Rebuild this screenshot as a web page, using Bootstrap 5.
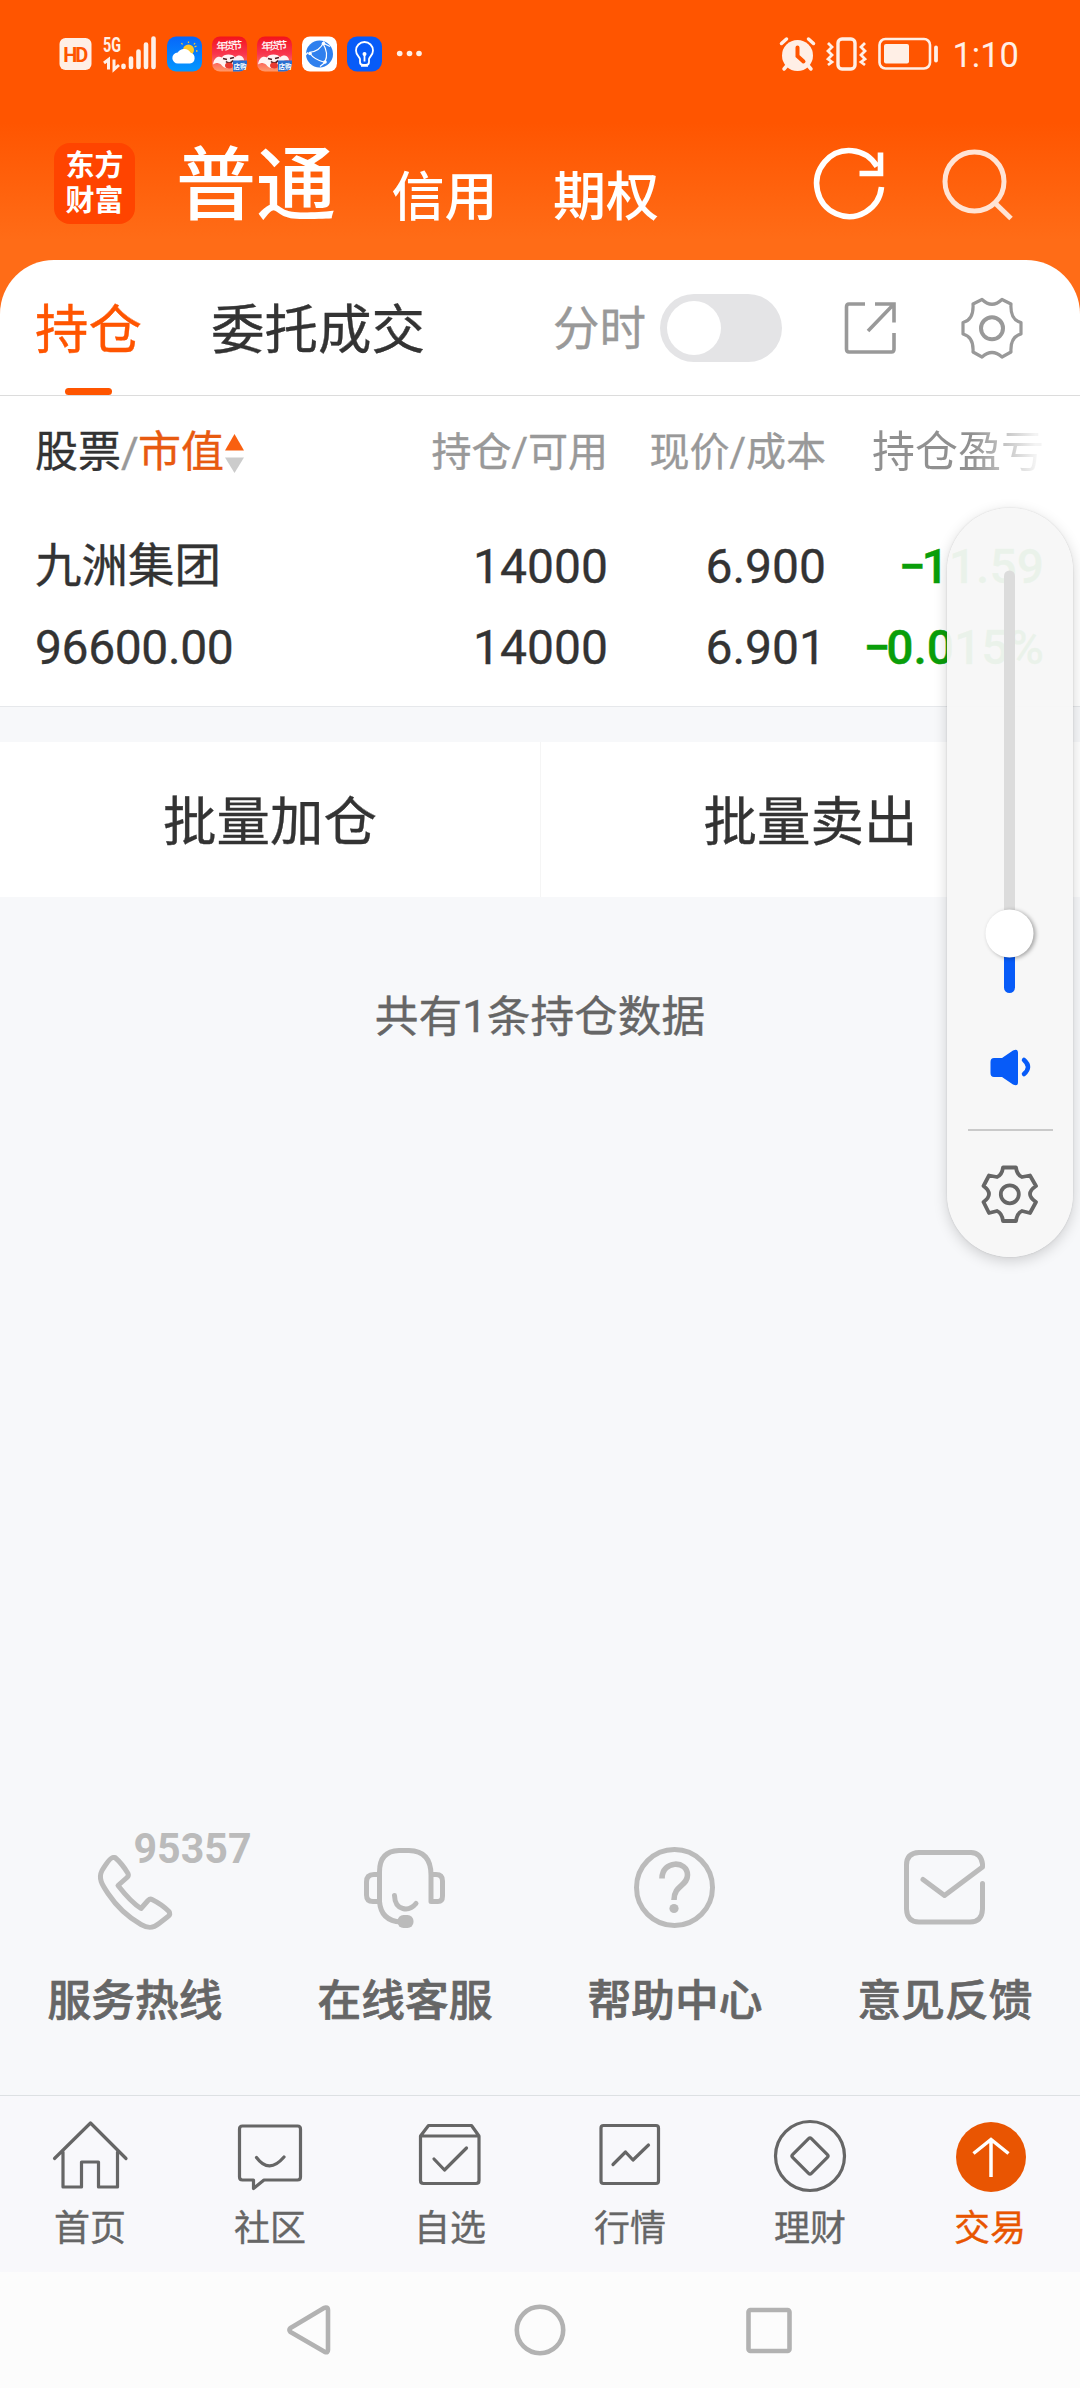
<!DOCTYPE html>
<html lang="zh-CN">
<head>
<meta charset="utf-8">
<meta name="viewport" content="width=device-width, initial-scale=1">
<title>交易</title>
<link rel="stylesheet" href="https://cdn.jsdelivr.net/npm/bootstrap@5.3.0/dist/css/bootstrap.min.css">
<style>
body{font-family:Roboto,"Noto Sans CJK SC",sans-serif;color:#333;background:#f7f8fa;line-height:1}
svg{display:block;flex:none;overflow:visible}
.screen{width:1080px;height:2388px}
.top-area{height:314px;background:linear-gradient(#f50 0,#f50 122px,#ff6c17 240px,#ff6c17 100%)}
.status{height:108px;padding:0 61px 0 59px}
.status .clock{font-size:34.5px;color:#ffefe6;margin-left:13px;padding-top:2px}
.brandbar{height:152px}
.logo{width:81px;height:81px;border-radius:16px;background:#ff4400;margin:35px 0 0 54px;align-self:flex-start;font-size:29px;line-height:34.5px;font-weight:700;padding-top:6px}
.seg-main{font-size:80px;font-weight:500;margin:0 0 34px 41px}
.seg{font-size:53px;font-weight:500;margin:0 0 35px 55.5px}
.head-icons{margin-bottom:23px;margin-right:49px}
.sheet{height:447px;margin-top:-54px;border-radius:54px 54px 0 0;border-bottom:1px solid #e6e8eb}
.sheet,.actions,.count,.tabbar{-webkit-text-stroke:.35px currentColor}
.tabs{height:136px;border-bottom:1px solid #dcdcdc;padding:0 52px 0 35px}
.tab-on{color:#ff5500;height:135px}
.tab-on::after{content:"";position:absolute;left:30px;bottom:0;width:47px;height:7px;border-radius:4px;background:#f50}
.tabtext{font-size:53.5px;line-height:142px}
.tab-next{margin-left:69px;padding-top:7px}
.min-chart{font-size:46.5px;color:#999;padding-top:4px}
.switch{width:122px;height:68px;border-radius:34px;background:#e4e4e6;padding:7px;margin:0 60px 0 14px}
.switch i{width:54px;height:54px;border-radius:50%;background:#fff}
.line{padding:0 36px 0 35px}
.c1{width:355px}.cn{width:218px;text-align:right}
.thead-line{height:113px;font-size:40px;color:#999}
.thead-line .c1,.thead-line .c4{font-size:43px}
.slash{width:17px;text-align:center}
.sorted{color:#e85a10;margin-right:1px}
.c4 .fade-text{-webkit-text-stroke:0;background:linear-gradient(90deg,#909090 58%,#f4f4f4 95%);-webkit-background-clip:text;background-clip:text;color:transparent}
.val{font-size:48px;height:81px}
.val .c1{letter-spacing:-.4px}
.val .stock{font-size:46.5px;letter-spacing:0}
.green{color:#0a9e0a;font-weight:500}
.minus{letter-spacing:-4px}
.gap-band{height:35px}
.actions{height:155px}
.actions>div{font-size:53.5px;padding-top:6px}
.actions>div+div{border-left:1px solid #f5f5f5}
.count{font-size:43.7px;color:#666;margin-top:99px;height:44px}
.services{height:267px;color:#666;font-size:43.7px;font-weight:500}
.services>div{width:270px}
.svc{margin-top:32px;-webkit-text-stroke:.7px #666}
.services svg{stroke:#bbb;fill:none;stroke-width:5;stroke-linecap:round;stroke-linejoin:round}
.tabbar{height:177px;border-top:1px solid #dde0e3;background:#f8f8fb;color:#666;font-size:36px;padding-top:16px}
.tabbar>div{width:180px}
.tl{margin-top:9px}
.tabbar svg{stroke:#666;fill:none;stroke-width:3.2;stroke-linejoin:round;stroke-linecap:round}
.tabbar .on{color:#e85500}
.sysnav{height:116px;background:#fcfcfc}
.sysnav svg{fill:none;stroke:#b2b2b2;stroke-width:4.6;stroke-linejoin:round}
.volume{left:947px;top:508px;width:126px;height:749px;border-radius:63px;background:rgba(247,247,247,.95);box-shadow:0 4px 14px rgba(0,0,0,.17),0 0 2px rgba(0,0,0,.15)}
</style>
</head>
<body>
<main class="screen d-flex flex-column position-relative overflow-hidden">
<header class="top-area flex-shrink-0 text-white">
  <div class="status d-flex align-items-center">
    <svg width="360" height="36" viewBox="59 36.500 360 36">
      <rect x="59.500" y="38.500" width="32" height="32" rx="6" fill="#ffefe6"/>
      <text x="75.700" y="62" text-anchor="middle" font-size="20" font-weight="700" fill="#f50" textLength="25">HD</text>
      <text x="103" y="52" font-size="20" font-weight="700" fill="#ffefe6" textLength="18" lengthAdjust="spacingAndGlyphs">5G</text>
      <path d="M104 63.500L108.500 60V70M114 60V70L119 65.500" stroke="#ffefe6" stroke-width="3" fill="none"/>
      <g stroke="#ffefe6" stroke-width="4.600" stroke-linecap="round"><path d="M123.500 66.300V67.500M131 59V67.500M138.500 52V67.500M146 45V67.500M153.500 39V67.500"/></g>
      <defs><linearGradient id="sky" x2="0" y2="1"><stop stop-color="#0767fa"/><stop offset="1" stop-color="#0497ff"/></linearGradient>
      <linearGradient id="red" x2="0" y2="1"><stop stop-color="#f3131c"/><stop offset=".5" stop-color="#f8354f"/><stop offset="1" stop-color="#ff9a6a"/></linearGradient></defs>
      <rect x="167" y="37" width="35" height="35" rx="9" fill="url(#sky)"/>
      <circle cx="188.500" cy="50.500" r="5.500" fill="#ffc928"/>
      <path d="M188.500 43.500v-1.500M182.500 45l-1-1.500M194 45l1-1.500M196 51.500h1.500M194.500 47.500l2-1" stroke="#ffc928" stroke-width="1.300"/>
      <path d="M178 64a5.500 5.500 0 0 1-.3-11 7.500 7.500 0 0 1 13 .3A5.500 5.500 0 0 1 190 64z" fill="#fff"/>
      <g id="gift"><rect x="212" y="37" width="35" height="35" rx="8" fill="url(#red)"/>
      <text x="229.500" y="50" text-anchor="middle" font-size="10.500" font-weight="500" fill="#fff" transform="rotate(-3 229 48)" textLength="26">年货节</text>
      <path d="M213 65c1-7 5-9 9-7 1-4 12-4 13 0 4-4 9-1 9 3-4-1-6 0-7 3l-6 4c-4 2-8 0-10-3-3-2-5-2-8 0z" fill="#fff" opacity=".93"/>
      <path d="M223 59l4 1M230 59l4-1M226 62c2 2 5 2 7-1" stroke="#502025" stroke-width="1.600" fill="none"/><ellipse cx="229" cy="66" rx="4" ry="3" fill="#e83a30"/>
      <path d="M233 61h14v3a8 8 0 0 1-8 8h-6z" fill="#2a6fd0"/><text x="240" y="69" text-anchor="middle" font-size="6.500" font-weight="700" fill="#fff">店购</text></g>
      <use href="#gift" x="45"/>
      <rect x="302" y="37" width="35" height="35" rx="8" fill="#fff"/><circle cx="319.500" cy="54.500" r="13.500" fill="#2f80ee"/>
      <g fill="none" stroke="#fff" stroke-width="1.200"><path d="M309 53Q320 52 324 42M310 54Q314 60 325 63M323 44Q329 54 325 62M325 63l-5 4M324 44l6 3M308 53l-3 3"/></g>
      <g fill="#fff"><circle cx="310" cy="54" r="1.800"/><circle cx="323.500" cy="44" r="1.800"/><circle cx="325" cy="62.500" r="1.800"/></g>
      <rect x="347" y="37" width="35" height="35" rx="10" fill="#075bf8"/>
      <path d="M360 59.500c-1-3-4-4-4-8.500a8.500 8.500 0 0 1 17 0c0 4.500-3 5.500-4 8.500v3a3 3 0 0 1-3 3h-3a3 3 0 0 1-3-3zM364.500 62v-8" fill="none" stroke="#fff" stroke-width="1.800"/><circle cx="364.500" cy="54.500" r="2" fill="#fff"/><path d="M361 66.500h7" stroke="#fff" stroke-width="1.500"/>
      <g fill="#ffefe6"><circle cx="399.700" cy="54" r="2.800"/><circle cx="409.500" cy="54" r="2.800"/><circle cx="419" cy="54" r="2.800"/></g>
    </svg>
    <svg class="ms-auto" width="159" height="36" viewBox="782 36.500 159 36" fill="none" stroke="#ffefe6">
      <circle cx="799.500" cy="56" r="15.500" fill="#ffefe6" stroke="none"/>
      <path d="M783.500 44l5-4.500M815.500 44l-5-4.500" stroke-width="3.500" stroke-linecap="round"/><path d="M789 66l-3 3.500M810 66l3 3.500" stroke-width="3.500" stroke-linecap="round"/>
      <path d="M799.500 48v8.500l6 5.500" stroke="#f50" stroke-width="4" stroke-linecap="round"/>
      <rect x="840" y="39.500" width="17" height="30" rx="4" stroke-width="3.400"/>
      <path d="M830 43.500l4 4-4 4 4 4-4 4 4 3-4 3M867 43.500l-4 4 4 4-4 4 4 4-4 3 4 3" stroke-width="2.800"/>
      <rect x="881.500" y="39.500" width="50.500" height="29.500" rx="6" stroke-width="2.600"/><rect x="886" y="44.500" width="25" height="19.500" rx="2" fill="#ffefe6" stroke="none"/><path d="M938 48v13" stroke-width="3.800" stroke-linecap="round"/>
    </svg>
    <span class="clock">1:10</span>
  </div>
  <div class="brandbar d-flex align-items-end">
    <div class="logo text-center">东方<br>财富</div>
    <div class="seg-main">普通</div>
    <div class="seg">信用</div>
    <div class="seg">期权</div>
    <svg class="ms-auto head-icons" width="220" height="100" viewBox="812 136 220 100" fill="none" stroke="#fff" stroke-width="5.600">
      <path d="M878 165.500A32.500 33 0 1 0 882.500 186M881.500 151.500V172.500H860.500"/>
      <g stroke="#ffe4d5" stroke-width="5"><circle cx="975.500" cy="180.500" r="29.500"/><path d="M996 202l16 15.500"/></g>
    </svg>
  </div>
</header>

<section class="sheet bg-white flex-shrink-0">
  <div class="tabs d-flex align-items-center">
    <div class="tab-on tabtext position-relative">持仓</div>
    <div class="tabtext tab-next">委托成交</div>
    <div class="ms-auto min-chart">分时</div>
    <div class="switch d-flex"><i></i></div>
    <svg width="186" height="68" viewBox="842 293 186 68" fill="none" stroke="#999" stroke-width="3.600">
      <path d="M865 303H849Q846.500 303 846.500 306V348Q846.500 351 849 351H891.500Q894 351 894 348V332M875 303H894V321.500M893 304L868 330"/>
      <path d="M973 303 982 298.500Q992 308 1002 298.500L1011 303Q1010 319 1021 321.500V333Q1010 336 1011 351L1002 356Q992 347 982 356L973 351Q974 336 963 333V321.500Q974 319 973 303Z" stroke-linejoin="round" stroke-width="3.200"/><circle cx="992" cy="327.300" r="11" stroke-width="4"/>
    </svg>
  </div>
  <div class="line thead-line d-flex align-items-center">
    <div class="c1 d-flex align-items-center"><span style="color:#333">股票</span><span class="slash">/</span><span class="sorted">市值</span>
      <svg width="19" height="40" viewBox="0 0 19 40"><path d="M0 17.500L9.500 1 19 17.500z" fill="#f96010"/><path d="M0 24.500h19L9.500 40z" fill="#ccc"/></svg></div>
    <div class="cn">持仓/可用</div><div class="cn">现价/成本</div><div class="cn c4"><span class="fade-text">持仓盈亏</span></div>
  </div>
  <div class="line val d-flex align-items-center" style="margin-top:17px"><div class="c1 stock">九洲集团</div><div class="cn">14000</div><div class="cn">6.900</div><div class="cn green"><span class="minus">−</span>11.59</div></div>
  <div class="line val d-flex align-items-center"><div class="c1">96600.00</div><div class="cn">14000</div><div class="cn">6.901</div><div class="cn green"><span class="minus">−</span>0.015%</div></div>
</section>
<div class="gap-band flex-shrink-0"></div>
<section class="actions bg-white d-flex flex-shrink-0">
  <div class="w-50 d-flex align-items-center justify-content-center">批量加仓</div>
  <div class="w-50 d-flex align-items-center justify-content-center">批量卖出</div>
</section>
<p class="count text-center mb-0">共有1条持仓数据</p>

<section class="services d-flex mt-auto flex-shrink-0">
  <div class="text-center"><svg width="270" height="120" viewBox="0 1828 270 120"><path d="M113 1857.500q-3 0-11 13c-4 8 0 14 6 23 8 12 19 23 33 31 7 4 12 4 18-1l9-7q3-2 1-5c-5-5-11-9-17-12q-2-1-4 1l-7 8c-8-5-16-14-23-23l9-8q2-2 1-4-6-10-13-16z"/><text x="133.500" y="1863" font-family="Roboto" font-size="42" font-weight="700" fill="#bbb" stroke="none" textLength="118" lengthAdjust="spacingAndGlyphs">95357</text></svg><div class="svc">服务热线</div></div>
  <div class="text-center"><svg width="270" height="120" viewBox="270 1828 270 120"><path d="M379.500 1903V1872Q379.500 1851 399 1850.500H409Q431 1851 431 1875V1901.500H438Q442.500 1901.500 442.500 1896V1881Q442.500 1874.500 436 1874.500H431M379.500 1874.500H374Q366.500 1874.500 366.500 1882V1895Q366.500 1901.500 373 1901.500H379.500Q381 1921 401 1922M394.500 1895.500C395 1911 409 1912 416 1903.500"/><rect x="397.500" y="1915" width="16" height="13" rx="6" fill="#bbb" stroke="none"/></svg><div class="svc">在线客服</div></div>
  <div class="text-center"><svg width="270" height="120" viewBox="540 1828 270 120"><circle cx="674.500" cy="1887.500" r="38"/><path d="M662 1878.500C662 1860 687.500 1860 687.500 1875 687.500 1886 674 1885 674 1900" stroke-linecap="butt" stroke-width="5.600"/><circle cx="674" cy="1908.500" r="4.600" fill="#bbb" stroke="none"/></svg><div class="svc">帮助中心</div></div>
  <div class="text-center"><svg width="270" height="120" viewBox="810 1828 270 120"><path d="M923 1879.500L944.500 1895.500 982.500 1867V1864Q981 1853 971 1852.500H919Q906.500 1853 906.500 1865V1909Q907 1922 919 1922H970Q982 1922 982.500 1909V1883.500"/></svg><div class="svc">意见反馈</div></div>
</section>

<nav class="tabbar d-flex flex-shrink-0">
  <div class="d-flex flex-column align-items-center"><svg width="100" height="90"><path d="M14.500 46.500L50.500 11 86 46.500M23 40V75H41.500V50H58.500V75H77.500V40"/></svg><span class="tl">首页</span></div>
  <div class="d-flex flex-column align-items-center"><svg width="100" height="90"><path d="M22.500 14H77.500Q80.500 14 80.500 17V65Q80.500 68 77.500 68H44L33.500 76.500V68H22.500Q19.500 68 19.500 65V17Q19.500 14 22.500 14ZM36.500 45.500Q49 62.500 64 45"/></svg><span class="tl">社区</span></div>
  <div class="d-flex flex-column align-items-center"><svg width="100" height="90"><path d="M20.500 24L28.500 13.500H71.500L79 24ZV68.500Q20.500 71.500 23.500 71.500H76Q79 71.500 79 68.500V24M34 47L44.500 58 66.500 36"/></svg><span class="tl">自选</span></div>
  <div class="d-flex flex-column align-items-center"><svg width="100" height="90"><rect x="21" y="13.500" width="57.500" height="58" rx="2.500"/><path d="M33 52.500L45.500 40 53 48 68.500 33"/></svg><span class="tl">行情</span></div>
  <div class="d-flex flex-column align-items-center"><svg width="100" height="90"><circle cx="50" cy="44" r="34.500"/><rect x="36.700" y="30.700" width="26.600" height="26.600" rx="2" transform="rotate(45 50 44)"/></svg><span class="tl">理财</span></div>
  <div class="on d-flex flex-column align-items-center"><svg width="100" height="90"><circle cx="51" cy="45" r="35" fill="#e95502" stroke="none"/><path d="M51 65V27.500M33.500 41.500L51 27.500 68.500 41.500" stroke="#fff" stroke-linecap="butt" stroke-linejoin="miter" stroke-width="3.500"/></svg><span class="tl">交易</span></div>
</nav>
<div class="sysnav flex-shrink-0"><svg width="1080" height="116" viewBox="0 2272 1080 116"><path d="M326 2307.500Q328 2307.500 328 2310V2350Q328 2353 325 2352L290.500 2332Q288.500 2330 290.500 2328L324 2308Z"/><circle cx="540" cy="2330" r="23.200"/><rect x="748.500" y="2310" width="41" height="41" rx="2"/></svg></div>

<aside class="volume position-absolute">
  <svg width="126" height="749" viewBox="947 508 126 749">
    <path d="M1009.500 576V920" stroke="#dcdcdc" stroke-width="11" stroke-linecap="round"/><path d="M1009.500 940V987.500" stroke="#075bf8" stroke-width="11" stroke-linecap="round"/>
    <circle cx="1009.500" cy="933.500" r="24" fill="#fff" style="filter:drop-shadow(2px 1px 2px rgba(0,0,0,.35))"/>
    <path d="M994 1058H1002L1013 1050.500Q1018 1048 1018 1053V1082Q1018 1087 1013 1084.500L1002 1077H994Q990.500 1077 990.500 1073V1062Q990.500 1058 994 1058Z" fill="#075bf8"/>
    <path d="M1024 1060Q1032 1067 1024 1074" fill="none" stroke="#075bf8" stroke-width="4.500" stroke-linecap="round"/>
    <path d="M968 1130H1053" stroke="#bbb" stroke-width="1.500"/>
    <g fill="none" stroke="#666" stroke-width="3.800" stroke-linejoin="round"><path d="M1003 1167.500H1016Q1017 1175 1022 1177L1030 1175.500 1036 1186Q1030 1190 1030 1194T1036 1202L1030 1213 1022 1211Q1017 1213 1016 1221H1003Q1002 1213 997 1211L989 1213 983.500 1202Q989 1198 989 1194T983.500 1186L989 1175.500 997 1177Q1002 1175 1003 1167.500Z"/><circle cx="1009.800" cy="1194.300" r="9"/></g>
  </svg>
</aside>
</main>
<script src="https://cdn.jsdelivr.net/npm/bootstrap@5.3.0/dist/js/bootstrap.bundle.min.js"></script>
</body>
</html>
